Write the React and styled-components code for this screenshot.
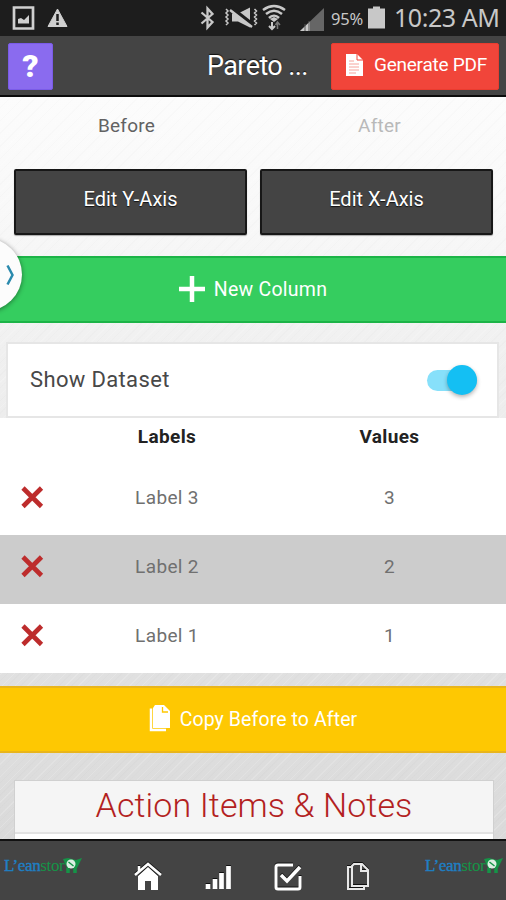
import styled, { createGlobalStyle, css } from 'styled-components'

const GlobalStyle = createGlobalStyle`
  * {
    box-sizing: border-box;
  }

  body {
    margin: 0;
    font-family: Roboto, "Noto Sans", sans-serif;
    overflow: hidden;
  }
`

const Screen = styled.div`
  position: relative;
  display: flex;
  flex-direction: column;
  width: 506px;
  height: 900px;
  overflow: hidden;
  background:
    repeating-linear-gradient(135deg, rgba(255, 255, 255, 0.16) 0 1px, transparent 1px 4px, rgba(0, 0, 0, 0.012) 4px 5px, transparent 5px 9px),
    linear-gradient(#fcfcfc 97px, #f8f8f8 220px, #f0f0f0 350px, #e0e0e0 680px, #dadada 840px);
`

const StatusBar = styled.div`
  display: flex;
  flex: none;
  height: 36px;
  background: #1d1d1d;

  svg {
    flex: none;
  }
`

const Percent = styled.span`
  width: 37px;
  font: 16.5px/38px "Noto Sans", sans-serif;
  letter-spacing: -0.2px;
  color: #c8c8c8;
`

const Clock = styled.span`
  margin-left: 8px;
  font: 25px/35px "Noto Sans", sans-serif;
  letter-spacing: -0.45px;
  white-space: nowrap;
  color: #c8c8c8;
`

const Header = styled.div`
  display: flex;
  flex: none;
  height: 61px;
  padding: 7px 7px 0 8px;
  background: #444;
  border-bottom: 2px solid #0c0c0c;
`

const HelpButton = styled.button`
  width: 45px;
  height: 47px;
  padding: 0;
  border: 1px solid #7a5be8;
  border-radius: 2px;
  background: #8a6bef;
  color: #fff;
  font: 900 32px/43px Roboto, sans-serif;
`

const Title = styled.h1`
  width: 104px;
  margin: 0 20px 0 154px;
  font-size: 27px;
  font-weight: 400;
  line-height: 46px;
  letter-spacing: -0.6px;
  white-space: nowrap;
  color: #fff;
  text-shadow: 0 -1px 1px #111;
`

const PdfButton = styled.button`
  display: flex;
  align-items: center;
  width: 168px;
  height: 47px;
  padding: 0 0 4px 14px;
  gap: 11px;
  border: 1px solid #ea3c2f;
  border-radius: 2px;
  background: #f1453a;
  color: #fff;
  font: 19px Roboto, sans-serif;
  letter-spacing: -0.25px;
  white-space: nowrap;
`

const Tabs = styled.div`
  display: grid;
  grid-template-columns: 1fr 1fr;
  flex: none;
  height: 72px;
`

const Tab = styled.div`
  text-align: center;
  font-size: 19px;
  line-height: 58px;
  letter-spacing: 0.25px;
  color: ${({ $active }) => ($active ? '#626262' : '#b9b9b9')};
`

const AxisButtons = styled.div`
  display: grid;
  grid-template-columns: 1fr 1fr;
  gap: 13px;
  flex: none;
  height: 67px;
  padding: 0 13px 0 14px;
`

const AxisButton = styled.button`
  height: 66px;
  padding: 0 0 6px;
  border: 2px solid #171717;
  border-radius: 2px;
  background: #444;
  box-shadow: 0 1px 1px #aaa;
  color: #fff;
  font: 20px Roboto, sans-serif;
  text-shadow: 0 1px 1px #111;
`

const tones = {
  green: css`
    margin-top: 20px;
    gap: 9px;
    background: #35cd5f;
    border-color: #1cb447;
    letter-spacing: 0.25px;
  `,
  yellow: css`
    margin-top: 13px;
    gap: 9px;
    background: #fec802;
    border-color: #e9b51b;
    letter-spacing: 0.1px;
  `,
}

const WideButton = styled.button`
  display: flex;
  flex: none;
  align-items: center;
  justify-content: center;
  width: 100%;
  height: 67px;
  padding: 0;
  border: solid;
  border-width: 2px 0;
  color: #fff;
  font: 19.5px Roboto, sans-serif;
  ${({ $tone }) => tones[$tone]}

  svg {
    position: relative;
    top: -1px;
  }
`

const DatasetCard = styled.div`
  display: flex;
  flex: none;
  align-items: center;
  justify-content: space-between;
  height: 76px;
  margin: 19px 7px 0 6px;
  padding: 0 20px 2px 22px;
  border: 2px solid #e6e6e6;
  background: #fff;
  color: #484848;
  font-size: 22px;
  letter-spacing: 0.35px;
`

const Toggle = styled.div`
  display: flex;
  align-items: center;
  justify-content: flex-end;
  width: 50px;
  height: 21px;
  margin-top: 2px;
  border-radius: 11px;
  background: #87e0fa;
`

const Knob = styled.div`
  width: 30px;
  height: 30px;
  border-radius: 50%;
  background: #14bff3;
  box-shadow: 0 2px 4px rgba(0, 0, 0, 0.3);
`

const Table = styled.div`
  flex: none;
  background: #fff;
`

const Row = styled.div`
  display: grid;
  grid-template-columns: 61px 212px 233px;
  align-items: center;
  height: 69px;
  padding-bottom: 7px;
  background: ${({ $shaded }) => ($shaded ? '#ccc' : '#fff')};
  color: #707070;
  font-size: 19px;
  letter-spacing: 0.35px;
  text-align: center;

  svg {
    justify-self: end;
    margin-right: 17px;
  }
`

const HeadRow = styled(Row)`
  height: 48px;
  padding-bottom: 11px;
  color: #222;
  font-weight: 700;
`

const Notes = styled.div`
  flex: 1;
  margin: 27px 12px 0 14px;
  background: #fff;
  border: 1px solid #d0d0d0;
  border-bottom: 0;
`

const NotesTitle = styled.h2`
  height: 53px;
  margin: 0;
  background: #f5f5f5;
  border-bottom: 2px solid #e2e2e2;
  color: #b31f22;
  font-size: 34px;
  font-weight: 350;
  line-height: 49px;
  letter-spacing: 0.1px;
  text-align: center;
  white-space: nowrap;
`

const Footer = styled.div`
  display: grid;
  grid-template-columns: 113px repeat(4, 70px) 113px;
  flex: none;
  height: 61px;
  border-top: 2px solid #111;
  background: #444;
`

const FooterItem = styled.div`
  display: flex;
  justify-content: center;
  padding-top: 21px;

  svg {
    filter: drop-shadow(0 -1px 0 #111);
  }
`

const Logo = styled.div`
  display: flex;
  align-items: flex-start;
  width: 81px;
  height: 26px;
  margin-top: 12px;
  margin-left: ${({ $right }) => ($right ? 32 : 4)}px;
  font: 17px/25px "Liberation Serif", serif;
  letter-spacing: -0.35px;
  color: #159447;
  white-space: nowrap;

  b {
    font-weight: 400;
    color: #1f7fc3;
    -webkit-text-stroke: 0.4px #1f7fc3;
  }

  svg {
    flex: none;
    margin: 3px 0 0 -1px;
  }
`

const Handle = styled.div`
  position: absolute;
  top: 238px;
  left: -51px;
  display: flex;
  align-items: center;
  justify-content: flex-end;
  width: 73px;
  height: 73px;
  padding-right: 7px;
  border-radius: 50%;
  background: #fcfcfc;
  box-shadow: 0 1px 5px rgba(0, 0, 0, 0.45);
`

const DeleteIcon = () => (
  <svg width="24" height="24" viewBox="0 0 24 24">
    <path d="M3 3 21.500 21.500M21.500 3 3 21.500" stroke="#bd2c2c" strokeWidth="4.600" />
  </svg>
)

const StatusLeft = () => (
  <svg width="80" height="36" viewBox="0 0 80 36">
    <path d="M14 7.5H33V28.5H14Z" fill="none" stroke="#d0d0d0" strokeWidth="2.7" />
    <path d="M18 23.5V19l3-1 3 2 5-5v8.500Z" fill="#d0d0d0" />
    <path d="M57.500 9 67 26.500H48Z" fill="#d0d0d0" stroke="#d0d0d0" strokeWidth="1" />
    <path d="M57.500 14v7M57.500 22.500v2.500" stroke="#1d1d1d" strokeWidth="2.500" />
  </svg>
)

const StatusRight = () => (
  <svg width="136" height="36" viewBox="195 0 136 36" fill="none" stroke="#c8c8c8" strokeWidth="2">
    <path d="m201.500 12.500 11 9.500-5 5.500v-19l5 5.500-11 9.500" strokeWidth="2.300" />
    <path d="M232 13.500h6l12-6v20l-12-6h-6Z" fill="#c8c8c8" stroke="none" />
    <path d="m231 8 23 18" stroke="#1d1d1d" strokeWidth="4.500" />
    <path d="m230 10 22 17" strokeWidth="2.500" />
    <path d="m226 9 2 2-2 2 2 2-2 2 2 2-2 2 2 2-2 2M254.500 9l2 2-2 2 2 2-2 2 2 2-2 2 2 2-2 2" strokeWidth="1.500" />
    <path d="M263 10c7-5 15-5 22 0M266 14c5-4 11-4 16 0M269 18c3-3 7-3 10 0" strokeWidth="2.500" />
    <path d="m270 19 4 3 4-3-4-2Z" fill="#c8c8c8" stroke="none" />
    <path d="M272 22v7m-3-3 3 3 3-3" />
    <path d="M277.500 29v-7m-2 3 2-3 2.500 3" stroke="#777" strokeWidth="1.500" />
    <path d="M300 31 324 8v23Z" fill="#666" stroke="none" />
    <path d="M300 31 310 21.500V31Z" fill="#c8c8c8" stroke="none" />
    <path d="M305 31v-7M309 31V21" stroke="#555" strokeWidth="1" />
  </svg>
)

const BatteryIcon = () => (
  <svg width="18" height="36" viewBox="0 0 18 36">
    <path d="M0 8.500H5V6.500h7v2h5v20H0Z" fill="#c8c8c8" />
  </svg>
)

const PdfIcon = () => (
  <svg width="17" height="22" viewBox="0 0 17 22">
    <path d="M0 0H11L17 6V22H0Z" fill="#fff" />
    <path d="M11 0v6h6" fill="none" stroke="#f1453a" strokeWidth="1" />
    <path d="M3 7h5M3 10h10M3 13h10M3 16h10M3 19h7" stroke="#f6a49d" strokeWidth="1" />
  </svg>
)

const CopyIcon = () => (
  <svg width="22" height="27" viewBox="0 0 22 27">
    <path d="M2 3.500V25H17" fill="none" stroke="#fff" strokeWidth="2.500" />
    <path d="M6 0H15L21 6V23H4V3Z" fill="#fff" />
    <path d="M13.500 2v5H19" fill="none" stroke="#fec802" strokeWidth="1.300" />
  </svg>
)

const CartLogo = ({ right }) => (
  <Logo $right={right}>
    <b>L’ean</b>stor
    <svg width="20" height="20" viewBox="0 0 20 20">
      <path d="M0 3 5 2l8 2 6-2-4 8-1 2H4Z" fill="#159447" />
      <circle cx="8" cy="8" r="4.500" fill="#dcefe2" />
      <path d="m5.500 6 5 4" stroke="#159447" strokeWidth="1.500" />
      <path d="M5 12v5M12 12v5" stroke="#159447" strokeWidth="3.500" />
    </svg>
  </Logo>
)

const rows = [3, 2, 1]

export default function App() {
  return (
    <Screen>
      <GlobalStyle />
      <StatusBar>
        <StatusLeft />
        <svg width="115" height="36" />
        <StatusRight />
        <Percent>95%</Percent>
        <BatteryIcon />
        <Clock>10:23 AM</Clock>
      </StatusBar>

      <Header>
        <HelpButton>?</HelpButton>
        <Title>Pareto ...</Title>
        <PdfButton>
          <PdfIcon />
          Generate PDF
        </PdfButton>
      </Header>

      <Tabs>
        <Tab $active>Before</Tab>
        <Tab>After</Tab>
      </Tabs>

      <AxisButtons>
        <AxisButton>Edit Y-Axis</AxisButton>
        <AxisButton>Edit X-Axis</AxisButton>
      </AxisButtons>

      <WideButton $tone="green">
        <svg width="26" height="26" viewBox="0 0 26 26">
          <path d="M13 0V26M0 13H26" stroke="#fff" strokeWidth="4.500" />
        </svg>
        New Column
      </WideButton>

      <DatasetCard>
        Show Dataset
        <Toggle>
          <Knob />
        </Toggle>
      </DatasetCard>

      <Table>
        <HeadRow>
          <span />
          <span>Labels</span>
          <span>Values</span>
        </HeadRow>
        {rows.map((n) => (
          <Row key={n} $shaded={n === 2}>
            <DeleteIcon />
            <span>Label {n}</span>
            <span>{n}</span>
          </Row>
        ))}
      </Table>

      <WideButton $tone="yellow">
        <CopyIcon />
        Copy Before to After
      </WideButton>

      <Notes>
        <NotesTitle>Action Items &amp; Notes</NotesTitle>
      </Notes>

      <Footer>
        <CartLogo />
        <FooterItem>
          <svg width="28" height="30" viewBox="0 0 28 30">
            <path d="M4 14 14 5l10 9v14h-7v-9h-6v9H4Z" fill="#fff" />
            <path d="M1 13 14 2l13 11M5 9V4" fill="none" stroke="#fff" strokeWidth="2.500" />
          </svg>
        </FooterItem>
        <FooterItem>
          <svg width="27" height="30" viewBox="0 0 27 30">
            <path d="M3 22v5M10 17v10M16.500 11v16M23.500 4v23" stroke="#fff" strokeWidth="4.700" />
          </svg>
        </FooterItem>
        <FooterItem>
          <svg width="30" height="30" viewBox="0 0 30 30" fill="none" stroke="#fff">
            <path d="M20 3H5Q3 3 3 5v20q0 2 2 2h20q2 0 2-2V14" strokeWidth="3" />
            <path d="m8 13 6 6L27 5" strokeWidth="3.500" />
          </svg>
        </FooterItem>
        <FooterItem>
          <svg width="24" height="30" viewBox="0 0 24 30" fill="none" stroke="#e8e8e8" strokeWidth="2">
            <path d="M8 2h8l6 6v16H6V4ZM15 2v7h7" />
            <path d="M5 5H2v22h16v-3" />
          </svg>
        </FooterItem>
        <CartLogo right />
      </Footer>

      <Handle>
        <svg width="9" height="22" viewBox="0 0 9 22">
          <path d="m1.500 1.500 5 9.500-5 9.500" fill="none" stroke="#2a8aad" strokeWidth="2.500" />
        </svg>
      </Handle>
    </Screen>
  )
}
